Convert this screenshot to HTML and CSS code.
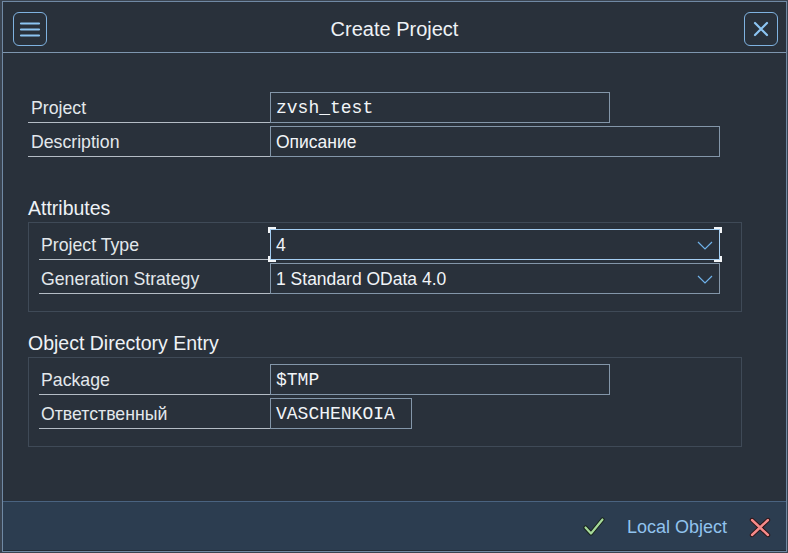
FILE: index.html
```html
<!DOCTYPE html>
<html>
<head>
<meta charset="utf-8">
<link rel="stylesheet" href="styles.css">
</head>
<body>
<div class="window">
  <header class="titlebar">
    <button class="tbtn" aria-label="Menu">
      <svg width="22" height="16" viewBox="0 0 22 16"><path d="M2 2.5h18M2 8.5h18M2 14.5h18" stroke="#8cc4f2" stroke-width="2.2" stroke-linecap="round"/></svg>
    </button>
    <div class="title">Create Project</div>
    <button class="tbtn" aria-label="Close">
      <svg width="16" height="16" viewBox="0 0 16 16"><path d="M2 2L14 14M14 2L2 14" stroke="#8cc4f2" stroke-width="2.2" stroke-linecap="round"/></svg>
    </button>
  </header>

  <main class="content">
    <div class="rows top">
      <div class="row">
        <div class="label">Project</div>
        <div class="field mono w340">zvsh_test</div>
      </div>
      <div class="row">
        <div class="label">Description</div>
        <div class="field w450">Описание</div>
      </div>
    </div>

    <h2 class="heading first">Attributes</h2>
    <div class="group">
      <div class="row">
        <div class="label">Project Type</div>
        <div class="field w450 select focused">
          <span>4</span>
          <svg class="chev" width="16" height="9" viewBox="0 0 16 9"><path d="M1 1l7 7 7-7" fill="none" stroke="#6fb2ea" stroke-width="1.2"/></svg>
          <i class="br tl"></i><i class="br tr"></i><i class="br bl"></i><i class="br brr"></i>
        </div>
      </div>
      <div class="row">
        <div class="label">Generation Strategy</div>
        <div class="field w450 select">
          <span>1 Standard OData 4.0</span>
          <svg class="chev" width="16" height="9" viewBox="0 0 16 9"><path d="M1 1l7 7 7-7" fill="none" stroke="#6fb2ea" stroke-width="1.2"/></svg>
        </div>
      </div>
    </div>

    <h2 class="heading">Object Directory Entry</h2>
    <div class="group">
      <div class="row">
        <div class="label">Package</div>
        <div class="field mono w340">$TMP</div>
      </div>
      <div class="row">
        <div class="label">Ответственный</div>
        <div class="field mono w142">VASCHENKOIA</div>
      </div>
    </div>
  </main>

  <footer class="footer">
    <svg class="ficon" width="22" height="20" viewBox="0 0 22 20"><path d="M2.5 10.5l5.5 6 11.5-14" fill="none" stroke="#17231a" stroke-width="4.2" stroke-linecap="round" stroke-linejoin="round"/><path d="M2.5 10.5l5.5 6 11.5-14" fill="none" stroke="#a5d99a" stroke-width="2.2" stroke-linecap="round" stroke-linejoin="round"/></svg>
    <span class="local">Local Object</span>
    <svg class="ficon" width="22" height="21" viewBox="0 0 22 21"><path d="M3 3l16 15M19 3L3 18" fill="none" stroke="#2a1214" stroke-width="4.4" stroke-linecap="round"/><path d="M3 3l16 15M19 3L3 18" fill="none" stroke="#f58a8a" stroke-width="2.4" stroke-linecap="round"/></svg>
  </footer>
</div>
</body>
</html>
```

FILE: styles.css
```css
* { box-sizing: border-box; }
html, body { margin: 0; padding: 0; }
body {
  background: #3a4451;
  width: 788px;
  height: 553px;
  overflow: hidden;
  font-family: "Liberation Sans", Arial, sans-serif;
  color: #e6eaee;
}
.window {
  margin: 1px 1px 0 2px;
  width: 785px;
  height: 551px;
  border: 1px solid #7089a4;
  background: #29313b;
  display: flex;
  flex-direction: column;
}
.titlebar {
  height: 51px;
  border-bottom: 1px solid #7e96af;
  display: flex;
  align-items: flex-start;
  padding: 10px 8px 0 10px;
}
.tbtn {
  width: 34px;
  height: 34px;
  border: 1px solid #7fb2e0;
  border-radius: 6px;
  background: transparent;
  display: flex;
  align-items: center;
  justify-content: center;
  padding: 0;
  margin: 0;
}
.title {
  flex: 1;
  text-align: center;
  font-size: 20px;
  line-height: 34px;
  color: #eef2f6;
  padding-right: 2px;
}
.content {
  flex: 1;
  padding: 39px 44px 0 25px;
}
.rows, .group {
  display: flex;
  flex-direction: column;
  gap: 3px;
}
.row {
  display: flex;
  height: 31px;
}
.label {
  width: 242px;
  border-bottom: 1px solid #b4bcc5;
  font-size: 17.7px;
  padding-left: 3px;
  display: flex;
  align-items: center;
  padding-top: 2px;
  color: #e3e8ec;
}
.group .label {
  width: 231px;
  padding-left: 2px;
}
.field {
  position: relative;
  height: 31px;
  border: 1px solid #8396a9;
  display: flex;
  align-items: center;
  padding: 1px 6px 0 5px;
  font-size: 17.5px;
  color: #f2f5f8;
}
.mono {
  font-family: "Liberation Mono", "DejaVu Sans Mono", monospace;
  font-size: 18px;
}
.w340 { width: 340px; }
.w450 { width: 450px; }
.w142 { width: 142px; }
.select { justify-content: space-between; }
.chev { margin-top: 1px; }
.focused { border-color: #a4cef2; }
.br {
  position: absolute;
  width: 8px;
  height: 6px;
  border-color: #f4f6f8;
  border-style: solid;
  border-width: 0;
}
.tl { left: -3px; top: -3px; border-left-width: 2px; border-top-width: 2px; }
.tr { right: -3px; top: -3px; border-right-width: 2px; border-top-width: 2px; }
.bl { left: -3px; bottom: -3px; border-left-width: 2px; border-bottom-width: 2px; }
.brr { right: -3px; bottom: -3px; border-right-width: 2px; border-bottom-width: 2px; }
.heading {
  margin: 19px 0 2px 0;
  font-size: 19.5px;
  line-height: 24px;
  font-weight: normal;
  color: #eef2f6;
}
.heading.first { margin-top: 39px; }
.group {
  border: 1px solid #3f4a57;
  padding: 6px 0 17px 10px;
}
.footer {
  height: 50px;
  border-top: 1px solid #4a6380;
  border-bottom: 1px solid #222a33;
  background: #2c3d50;
  display: flex;
  align-items: center;
  justify-content: flex-end;
  padding: 2px 15px 0 0;
  gap: 22px;
}
.local {
  font-size: 18px;
  color: #91c3ee;
}
```
